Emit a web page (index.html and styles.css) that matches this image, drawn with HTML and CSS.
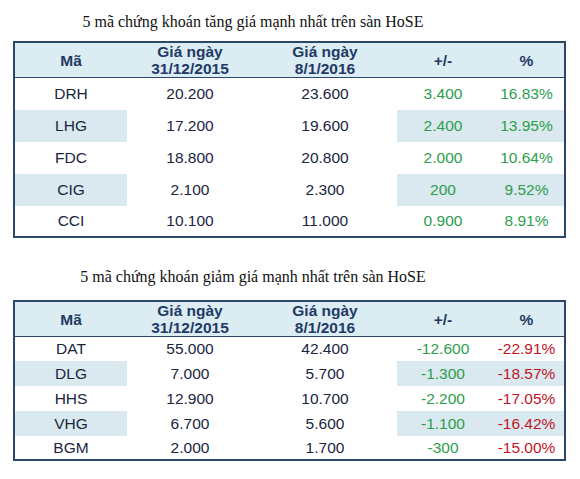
FILE: index.html
```html
<!DOCTYPE html>
<html>
<head>
<meta charset="utf-8">
<link rel="stylesheet" href="styles.css">
</head>
<body>
<section class="block block-up">
  <h2 class="title">5 mã chứng khoán tăng giá mạnh nhất trên sàn HoSE</h2>
  <table class="stocks tall">
    <colgroup>
      <col class="c1"><col class="c2"><col class="c3"><col class="c4"><col class="c5">
    </colgroup>
    <thead>
      <tr><th>Mã</th><th>Giá ngày<br>31/12/2015</th><th>Giá ngày<br>8/1/2016</th><th>+/-</th><th>%</th></tr>
    </thead>
    <tbody>
      <tr><td>DRH</td><td>20.200</td><td>23.600</td><td class="g">3.400</td><td class="g">16.83%</td></tr>
      <tr class="alt"><td>LHG</td><td>17.200</td><td>19.600</td><td class="g">2.400</td><td class="g">13.95%</td></tr>
      <tr><td>FDC</td><td>18.800</td><td>20.800</td><td class="g">2.000</td><td class="g">10.64%</td></tr>
      <tr class="alt"><td>CIG</td><td>2.100</td><td>2.300</td><td class="g">200</td><td class="g">9.52%</td></tr>
      <tr><td>CCI</td><td>10.100</td><td>11.000</td><td class="g">0.900</td><td class="g">8.91%</td></tr>
    </tbody>
  </table>
</section>
<section class="block block-down">
  <h2 class="title">5 mã chứng khoán giảm giá mạnh nhất trên sàn HoSE</h2>
  <table class="stocks short">
    <colgroup>
      <col class="c1"><col class="c2"><col class="c3"><col class="c4"><col class="c5">
    </colgroup>
    <thead>
      <tr><th>Mã</th><th>Giá ngày<br>31/12/2015</th><th>Giá ngày<br>8/1/2016</th><th>+/-</th><th>%</th></tr>
    </thead>
    <tbody>
      <tr><td>DAT</td><td>55.000</td><td>42.400</td><td class="g">-12.600</td><td class="r">-22.91%</td></tr>
      <tr class="alt"><td>DLG</td><td>7.000</td><td>5.700</td><td class="g">-1.300</td><td class="r">-18.57%</td></tr>
      <tr><td>HHS</td><td>12.900</td><td>10.700</td><td class="g">-2.200</td><td class="r">-17.05%</td></tr>
      <tr class="alt"><td>VHG</td><td>6.700</td><td>5.600</td><td class="g">-1.100</td><td class="r">-16.42%</td></tr>
      <tr><td>BGM</td><td>2.000</td><td>1.700</td><td class="g">-300</td><td class="r">-15.00%</td></tr>
    </tbody>
  </table>
</section>
</body>
</html>
```
FILE: styles.css
```css
html, body {
  margin: 0;
  padding: 0;
  background: #ffffff;
}
body {
  padding-left: 13px;
  padding-top: 13px;
}
.title {
  width: 480px;
  margin: 0;
  font-family: "Liberation Serif", "Times New Roman", serif;
  font-size: 16px;
  font-weight: normal;
  line-height: 18px;
  color: #111111;
  text-align: center;
}
.block-up .title { margin-bottom: 10px; }
.block-down { margin-top: 30px; }
.block-down .title { margin-bottom: 14px; }

.stocks {
  width: 553px;
  table-layout: fixed;
  border-collapse: collapse;
  border: 2px solid #2b4769;
  font-family: "Liberation Sans", Arial, sans-serif;
  font-size: 15.5px;
  color: #1a253e;
}
.c1 { width: 113px; }
.c2 { width: 126px; }
.c3 { width: 144px; }
.c4 { width: 92px; }
.c5 { width: 76px; }

.stocks th {
  background: #dbecf2;
  color: #1f3a66;
  font-weight: bold;
  line-height: 17px;
  height: 34px;
  padding: 0;
  text-align: center;
  border-bottom: 1px solid #2b4769;
}
.stocks td {
  padding: 0;
  text-align: center;
  line-height: 18px;
}
.tall td { height: 32px; }
.tall tbody tr:last-child td { height: 30px; }
.short td { height: 25px; }
.short tbody tr:first-child td { height: 24px; }
.short tbody tr:last-child td { height: 23px; }

.stocks tr.alt td:nth-child(1),
.stocks tr.alt td:nth-child(4),
.stocks tr.alt td:nth-child(5) {
  background: #dae9ef;
}
.g { color: #2e9d4c; }
.r { color: #c3141f; }
```
